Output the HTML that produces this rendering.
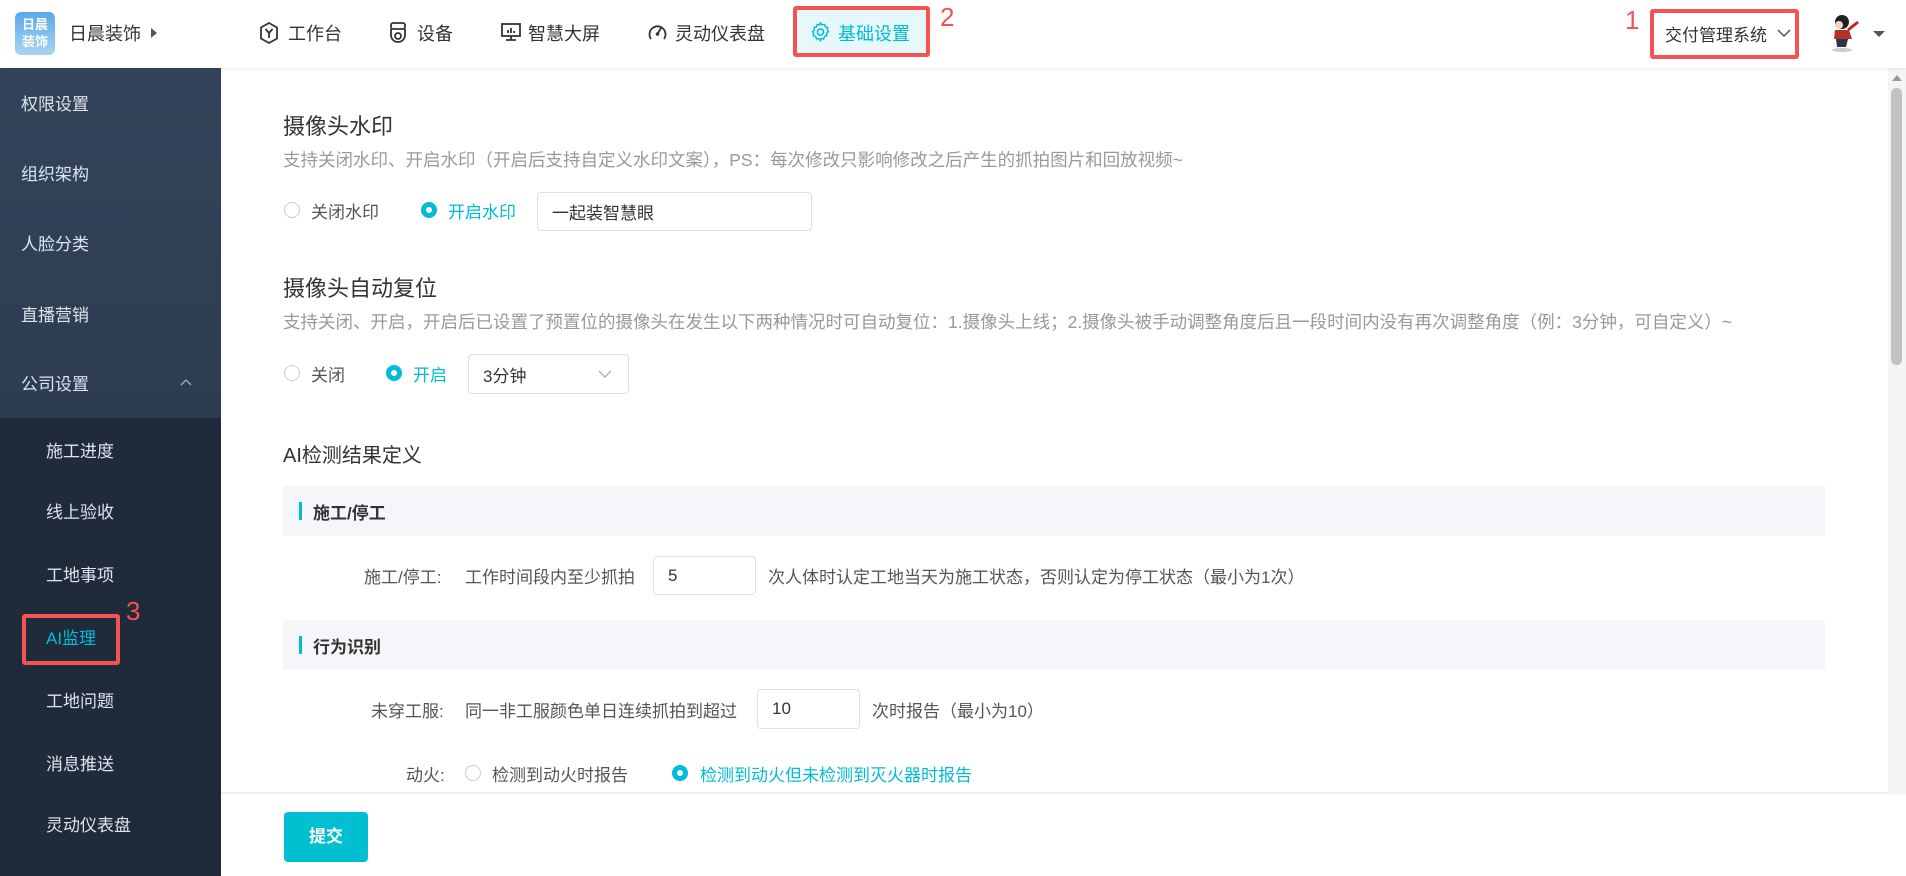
<!DOCTYPE html>
<html><head><meta charset="utf-8"><style>
*{margin:0;padding:0;box-sizing:border-box}
body{width:1906px;height:876px;overflow:hidden;background:#fff;font-family:"Liberation Sans","Noto Sans CJK SC",sans-serif;color:#333;position:relative}
.a{position:absolute;white-space:nowrap}
.hdr{position:absolute;left:0;top:0;width:1906px;height:68px;background:#fff;box-shadow:0 1px 4px rgba(0,0,0,.08);z-index:2}
.nav{font-size:18px;color:#333;top:20px}
.side{position:absolute;left:0;top:68px;width:221px;height:808px;background:#1f2a3a}
.side .top{position:absolute;left:0;top:0;width:221px;height:350px;background:linear-gradient(#33445a,#2d3c50)}
.si{position:absolute;left:21px;font-size:17px;color:#dfe4ea}
.sub{position:absolute;left:46px;font-size:17px;color:#dfe4ea}
.t1{font-size:22px;color:#333}
.desc{font-size:17.5px;color:#999}
.rad{width:16px;height:16px;border-radius:50%;border:1px solid #ccc;background:#fff}
.rad.on{border:5px solid #00bcd4}
.inp{border:1px solid #dcdfe6;border-radius:4px;background:#fff;font-size:17px;color:#333;padding-left:14px;display:flex;align-items:center}
.bar{position:absolute;left:283px;width:1542px;height:50px;background:#f4f6f9}
.bar b{position:absolute;left:16px;top:16px;width:3px;height:18px;background:#00bcd4}
.bar span{position:absolute;left:30px;top:13px;font-size:17px;font-weight:bold;color:#333}
.lab{font-size:17px;color:#555}
.red{border:4px solid #f55353;border-radius:3px}
.rn{color:#f55353;font-size:26px}
</style></head><body>
<div class="hdr">
 <div class="a" style="left:15px;top:12px;width:40px;height:43px;border-radius:6px;background:linear-gradient(#5aa8e8,#a9d3f3);color:#fff;font-size:13px;font-weight:bold;line-height:17px;text-align:center;padding-top:4px">日晨<br>装饰</div>
 <div class="a" style="left:69px;top:20px;font-size:18px;color:#333">日晨装饰</div>
 <div class="a" style="left:151px;top:28px;width:0;height:0;border-left:6px solid #555;border-top:5px solid transparent;border-bottom:5px solid transparent"></div>
 <svg class="a" style="left:259px;top:22px" width="20" height="22" viewBox="0 0 20 22"><path d="M10 1L18 5.5V16.5L10 21L2 16.5V5.5Z" fill="none" stroke="#333" stroke-width="1.8"/><path d="M6.5 7L10 11L13.5 7M10 11V16" fill="none" stroke="#333" stroke-width="1.8"/></svg>
 <div class="a nav" style="left:288px">工作台</div>
 <svg class="a" style="left:389px;top:22px" width="18" height="22" viewBox="0 0 18 22"><rect x="2" y="1" width="14" height="6" rx="2" fill="none" stroke="#333" stroke-width="1.8"/><path d="M2 7v6a7 7 0 0 0 14 0V7" fill="none" stroke="#333" stroke-width="1.8"/><circle cx="9" cy="14" r="3" fill="none" stroke="#333" stroke-width="1.8"/></svg>
 <div class="a nav" style="left:417px">设备</div>
 <svg class="a" style="left:500px;top:22px" width="22" height="20" viewBox="0 0 22 20"><rect x="2" y="2" width="18" height="12" fill="none" stroke="#333" stroke-width="1.8"/><path d="M11 14v4M6 18h10M8 11V8M11 11V6M14 11V9" stroke="#333" stroke-width="1.8"/></svg>
 <div class="a nav" style="left:528px">智慧大屏</div>
 <svg class="a" style="left:647px;top:22px" width="21" height="21" viewBox="0 0 21 21"><path d="M4 17A8 8 0 1 1 17 17" fill="none" stroke="#333" stroke-width="1.8"/><path d="M10.5 12L14 6" stroke="#333" stroke-width="1.8"/><circle cx="10.5" cy="12" r="1.8" fill="#333"/></svg>
 <div class="a nav" style="left:675px">灵动仪表盘</div>
 <div class="a red" style="left:793px;top:6px;width:137px;height:51px;background:#e6f8fa"></div>
 <svg class="a" style="left:810px;top:22px" width="21" height="21" viewBox="0 0 24 24"><path d="M12 2l2 2.5 3-.5 1 3 3 1-.5 3L22 13l-2.5 2 .5 3-3 1-1 3-3-.5L12 24l-2-2.5-3 .5-1-3-3-1 .5-3L2 13l2.5-2-.5-3 3-1 1-3 3 .5z" transform="scale(.92) translate(1 -1)" fill="none" stroke="#00bcd4" stroke-width="1.8"/><circle cx="12" cy="11.5" r="3.5" fill="none" stroke="#00bcd4" stroke-width="1.8"/></svg>
 <div class="a nav" style="left:838px;color:#00bcd4">基础设置</div>
 <div class="a rn" style="left:940px;top:2px">2</div>
 <div class="a rn" style="left:1625px;top:5px">1</div>
 <div class="a red" style="left:1650px;top:9px;width:149px;height:50px"></div>
 <div class="a" style="left:1665px;top:21px;font-size:17px;color:#333">交付管理系统</div>
 <svg class="a" style="left:1777px;top:29px" width="14" height="9" viewBox="0 0 14 9"><path d="M1 1l6 6 6-6" fill="none" stroke="#555" stroke-width="1.5"/></svg>
 <svg class="a" style="left:1826px;top:12px" width="40" height="42" viewBox="0 0 40 42"><circle cx="16" cy="10" r="7" fill="#222"/><ellipse cx="13" cy="13" rx="4" ry="4" fill="#f2d6c2"/><path d="M9 18h14l3 9H8z" fill="#b3312a"/><path d="M22 18l10-8" stroke="#b3312a" stroke-width="3"/><path d="M10 27h12l-2 8h-9z" fill="#2a3550"/><ellipse cx="16" cy="38" rx="10" ry="2" fill="#ccc"/></svg>
 <div class="a" style="left:1873px;top:31px;border-top:6px solid #555;border-left:6px solid transparent;border-right:6px solid transparent"></div>
</div>
<div class="side"><div class="top"></div>
 <div class="si" style="top:22px">权限设置</div>
 <div class="si" style="top:92px">组织架构</div>
 <div class="si" style="top:162px">人脸分类</div>
 <div class="si" style="top:233px">直播营销</div>
 <div class="si" style="top:302px">公司设置</div>
 <svg class="a" style="left:180px;top:310px" width="12" height="8" viewBox="0 0 12 8"><path d="M1 7l5-5 5 5" fill="none" stroke="#aab" stroke-width="1.3"/></svg>
 <div class="sub" style="top:369px">施工进度</div>
 <div class="sub" style="top:430px">线上验收</div>
 <div class="sub" style="top:493px">工地事项</div>
 <div class="sub" style="top:556px;color:#00bcd4">AI监理</div>
 <div class="a red" style="left:22px;top:546px;width:98px;height:51px"></div>
 <div class="a rn" style="left:126px;top:528px">3</div>
 <div class="sub" style="top:619px">工地问题</div>
 <div class="sub" style="top:682px">消息推送</div>
 <div class="sub" style="top:743px">灵动仪表盘</div>
</div>

<div class="a t1" style="left:283px;top:109px">摄像头水印</div>
<div class="a desc" style="left:283px;top:147px">支持关闭水印、开启水印（开启后支持自定义水印文案），PS：每次修改只影响修改之后产生的抓拍图片和回放视频~</div>
<div class="a rad" style="left:284px;top:202px"></div>
<div class="a lab" style="left:311px;top:198px;color:#555">关闭水印</div>
<div class="a rad on" style="left:421px;top:202px"></div>
<div class="a lab" style="left:448px;top:198px;color:#00bcd4">开启水印</div>
<div class="a inp" style="left:537px;top:192px;width:275px;height:39px">一起装智慧眼</div>

<div class="a t1" style="left:283px;top:271px">摄像头自动复位</div>
<div class="a desc" style="left:283px;top:309px">支持关闭、开启，开启后已设置了预置位的摄像头在发生以下两种情况时可自动复位：1.摄像头上线；2.摄像头被手动调整角度后且一段时间内没有再次调整角度（例：3分钟，可自定义）~</div>
<div class="a rad" style="left:284px;top:365px"></div>
<div class="a lab" style="left:311px;top:361px">关闭</div>
<div class="a rad on" style="left:386px;top:365px"></div>
<div class="a lab" style="left:413px;top:361px;color:#00bcd4">开启</div>
<div class="a inp" style="left:468px;top:354px;width:161px;height:40px">3分钟</div>
<svg class="a" style="left:598px;top:370px" width="14" height="9" viewBox="0 0 14 9"><path d="M1 1l6 6 6-6" fill="none" stroke="#aaa" stroke-width="1.3"/></svg>

<div class="a" style="left:283px;top:439px;font-size:20px;color:#333">AI检测结果定义</div>
<div class="bar" style="top:486px"><b></b><span>施工/停工</span></div>
<div class="a lab" style="left:364px;top:563px">施工/停工:</div>
<div class="a lab" style="left:465px;top:563px">工作时间段内至少抓拍</div>
<div class="a inp" style="left:653px;top:556px;width:103px;height:39px">5</div>
<div class="a lab" style="left:768px;top:563px">次人体时认定工地当天为施工状态，否则认定为停工状态（最小为1次）</div>
<div class="bar" style="top:620px"><b></b><span>行为识别</span></div>
<div class="a lab" style="left:371px;top:697px">未穿工服:</div>
<div class="a lab" style="left:465px;top:697px">同一非工服颜色单日连续抓拍到超过</div>
<div class="a inp" style="left:757px;top:689px;width:103px;height:40px">10</div>
<div class="a lab" style="left:872px;top:697px">次时报告（最小为10）</div>
<div class="a lab" style="left:406px;top:761px">动火:</div>
<div class="a rad" style="left:465px;top:765px"></div>
<div class="a lab" style="left:492px;top:761px">检测到动火时报告</div>
<div class="a rad on" style="left:672px;top:765px"></div>
<div class="a lab" style="left:700px;top:761px;color:#00bcd4">检测到动火但未检测到灭火器时报告</div>

<div class="a" style="left:221px;top:792px;width:1685px;height:84px;background:#fff;border-top:2px solid #eef0f3"></div>
<div class="a" style="left:284px;top:812px;width:84px;height:50px;background:#00bfd1;border-radius:4px;color:#fff;font-size:17px;font-weight:bold;text-align:center;line-height:50px">提交</div>
<div class="a" style="left:1888px;top:68px;width:18px;height:725px;background:#f5f5f5"></div>
<div class="a" style="left:1892px;top:75px;border-bottom:6px solid #999;border-left:5px solid transparent;border-right:5px solid transparent"></div>
<div class="a" style="left:1891px;top:88px;width:11px;height:277px;background:#c1c1c1;border-radius:5px"></div>
</body></html>
